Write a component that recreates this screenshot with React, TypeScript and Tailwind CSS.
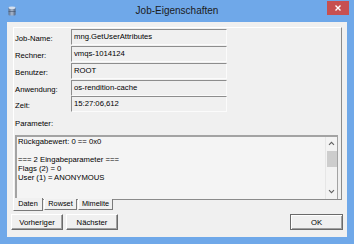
import React from 'react';

const font = "font-['Liberation_Sans',Arial,sans-serif]";

const fields: { label: string; value: string }[] = [
  { label: 'Job-Name:', value: 'mng.GetUserAttributes' },
  { label: 'Rechner:', value: 'vmqs-1014124' },
  { label: 'Benutzer:', value: 'ROOT' },
  { label: 'Anwendung:', value: 'os-rendition-cache' },
  { label: 'Zeit:', value: '15:27:06,612' },
];

const paramLines = [
  'Rückgabewert: 0 == 0x0',
  '',
  '=== 2 Eingabeparameter ===',
  'Flags (2) = 0',
  'User (1) = ANONYMOUS',
];

function AppIcon() {
  return (
    <svg width="8" height="10" viewBox="0 0 8 10">
      <defs>
        <linearGradient id="cyl" x1="0" x2="1" y1="0" y2="0">
          <stop offset="0" stopColor="#5a6f8c" />
          <stop offset="0.5" stopColor="#a9b9cf" />
          <stop offset="1" stopColor="#4d5f7a" />
        </linearGradient>
      </defs>
      <rect x="0.5" y="1" width="7" height="8.5" rx="1" fill="url(#cyl)" />
      <ellipse cx="4" cy="1.8" rx="3.5" ry="1.3" fill="#d6e0ee" />
      <line x1="0.5" x2="7.5" y1="5.5" y2="5.5" stroke="#40506a" strokeWidth="0.6" />
    </svg>
  );
}

function TitleBar() {
  return (
    <div className="h-[22px] grid grid-cols-[1fr_auto_1fr]">
      <div className="pl-[8px] pt-[6px]">
        <AppIcon />
      </div>
      <div className="text-[10px] leading-[22px] text-[#1b1b1b]">Job-Eigenschaften</div>
      <div className="flex justify-end pr-[5px] pt-[1px]">
        <div className="w-[22px] h-[14px] bg-[#c75050] flex items-center justify-center">
          <svg width="6" height="6" viewBox="0 0 6 6">
            <path d="M0.5 0.5 L5.5 5.5 M5.5 0.5 L0.5 5.5" stroke="#ffffff" strokeWidth="1.4" />
          </svg>
        </div>
      </div>
    </div>
  );
}

function ReadOnlyField({ value }: { value: string }) {
  return (
    <div className="h-[16px] border border-t-[#8d8d8d] border-l-[#8d8d8d] border-b-[#fbfbfb] border-r-[#fbfbfb] bg-[#f0f0f0] pl-[2px] leading-[13px] whitespace-nowrap overflow-hidden">
      {value}
    </div>
  );
}

function ScrollBar() {
  return (
    <div className="w-[12px] h-full bg-[#f3f3f3] border-l border-[#e6e6e6] flex flex-col items-center">
      <svg width="7" height="5" viewBox="0 0 7 5" className="mt-[4px]">
        <path d="M1 3.8 L3.5 1.3 L6 3.8" stroke="#606060" strokeWidth="1.1" fill="none" />
      </svg>
      <div className="w-[10px] h-[16px] bg-[#cdcdcd] mt-[5px]" />
      <div className="flex-1" />
      <svg width="7" height="5" viewBox="0 0 7 5" className="mb-[5px]">
        <path d="M1 1.2 L3.5 3.7 L6 1.2" stroke="#606060" strokeWidth="1.1" fill="none" />
      </svg>
    </div>
  );
}

function Tab({ label, selected, width }: { label: string; selected?: boolean; width: string }) {
  return (
    <div
      className={
        selected
          ? `${width} h-[13px] relative z-10 -mt-[1px] bg-[#f0f0f0] border-l border-l-white border-r border-r-[#7a7a7a] border-b border-b-[#7a7a7a] flex items-center justify-center pt-[1px] text-[7.3px] whitespace-nowrap`
          : `${width} h-[11px] bg-[#f0f0f0] border-l border-l-white border-r border-r-[#7a7a7a] border-b border-b-[#7a7a7a] flex items-center justify-center text-[7.3px] whitespace-nowrap`
      }
    >
      {label}
    </div>
  );
}

function Button({ label, isDefault, width }: { label: string; isDefault?: boolean; width: string }) {
  return (
    <button
      className={
        isDefault
          ? `${width} h-[16px] bg-[#f0f0f0] border border-[#6a6a6a] shadow-[inset_1px_1px_#ffffff,inset_-1px_-1px_#a0a0a0] leading-[13px] text-center`
          : `${width} h-[16px] bg-[#f0f0f0] border border-t-white border-l-white border-b-[#6a6a6a] border-r-[#6a6a6a] shadow-[inset_-1px_-1px_#a0a0a0] leading-[13px] text-center`
      }
    >
      {label}
    </button>
  );
}

export default function App() {
  return (
    <div className={`w-[354px] h-[244px] bg-[#6fa8e9] flex flex-col ${font} text-black text-[7.7px]`}>
      <TitleBar />
      <div className="flex-1 mx-[7px] mb-[7px] bg-[#f0f0f0] flex flex-col pt-[5px]">
        <div className="ml-[6px] w-[329px] flex flex-col">
          <div className="h-[173px] border border-t-white border-l-white border-r-[#8a8a8a] border-b-[#8a8a8a] flex flex-col pl-[1px] pt-[1px]">
            <div className="flex flex-col gap-[0.85px]">
              {fields.map((f) => (
                <div key={f.label} className="grid grid-cols-[56px_156px] h-[16px]">
                  <div className="leading-[13px] pt-[3px]">{f.label}</div>
                  <ReadOnlyField value={f.value} />
                </div>
              ))}
            </div>
            <div className="mt-[7px] leading-[9px]">Parameter:</div>
            <div className="mt-[7px] w-[323px] flex-1 border-t-2 border-l-2 border-r border-[#a3a3a3] bg-[#f4f4f4] flex">
              <div className="flex-1 pl-[1px] leading-[9px] whitespace-pre">
                {paramLines.map((line, i) => (
                  <div key={i} className="h-[9px]">
                    {line}
                  </div>
                ))}
              </div>
              <ScrollBar />
            </div>
          </div>
          <div className="flex gap-[1px] -mt-[1px]">
            <Tab label="Daten" selected width="w-[30px]" />
            <Tab label="Rowset" width="w-[33px]" />
            <Tab label="Mimelite" width="w-[35px]" />
          </div>
        </div>
        <div className="flex items-start px-[4px] mt-[3px]">
          <Button label="Vorheriger" width="w-[52px]" />
          <div className="w-[3px]" />
          <Button label="Nächster" width="w-[52px]" />
          <div className="flex-1" />
          <Button label="OK" isDefault width="w-[53px]" />
        </div>
      </div>
    </div>
  );
}
